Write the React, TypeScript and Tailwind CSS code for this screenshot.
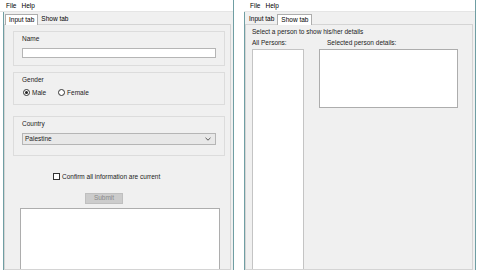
const font = { fontFamily: '"Liberation Sans", Arial, sans-serif' }

function MenuBar() {
  return (
    <div className="h-[12px] flex items-center gap-[5px] pl-[6px] text-[6.5px] text-black bg-white border-b border-[#e5e5e5]">
      <span>File</span>
      <span>Help</span>
    </div>
  )
}

function Tabs({ active }: { active: 0 | 1 }) {
  const tabs = ['Input tab', 'Show tab']
  return (
    <div className="h-[12px] flex items-end pl-[1px] text-[6.5px]">
      {tabs.map((t, i) => (
        <div
          key={t}
          className={
            i === active
              ? 'h-[11px] px-[3px] flex items-center bg-white border border-[#adadad] border-b-0 -mb-px relative z-10'
              : 'h-[10px] px-[3px] flex items-center bg-[#f0f0f0]'
          }
        >
          {t}
        </div>
      ))}
    </div>
  )
}

function Group({ title, children, className = '' }: { title: string; children: React.ReactNode; className?: string }) {
  return (
    <div className={`border border-[#dcdcdc] px-[8px] pt-[3px] ${className}`}>
      <div className="text-[6.5px] text-[#222] leading-[8px]">{title}</div>
      {children}
    </div>
  )
}

function Radio({ label, checked }: { label: string; checked?: boolean }) {
  return (
    <div className="flex items-center gap-[2px]">
      <div className="w-[7px] h-[7px] rounded-full border border-[#333] bg-white flex items-center justify-center">
        {checked && <div className="w-[3px] h-[3px] rounded-full bg-[#222]" />}
      </div>
      <span>{label}</span>
    </div>
  )
}

function InputWindow() {
  return (
    <div className="w-[234px] h-full flex flex-col bg-white border-r border-[#6f9ea3]">
      <MenuBar />
      <div className="flex-1 flex flex-col ml-[3px] bg-[#f0f0f0] border-l border-[#6f9ea3]">
        <Tabs active={0} />
        <div className="flex-1 flex flex-col border border-[#d4d4d4] mr-[2px] pl-[8px] pr-[5px] pt-[6px] text-[6.5px] text-[#222]">
          <Group title="Name" className="h-[35px]">
            <div className="mt-[5px] h-[10px] bg-white border border-[#b5b5b5]" />
          </Group>
          <Group title="Gender" className="mt-[6px] h-[33px]">
            <div className="flex gap-[12px] mt-[4px] ml-[1px]">
              <Radio label="Male" checked />
              <Radio label="Female" />
            </div>
          </Group>
          <Group title="Country" className="mt-[11px] h-[40px]">
            <div className="mt-[5px] h-[12px] bg-[#e8e8e8] border border-[#b5b5b5] flex items-center justify-between pl-[2px] pr-[4px]">
              <span>Palestine</span>
              <svg width="6" height="4" viewBox="0 0 6 4">
                <path d="M0.5 0.8 L3 3.2 L5.5 0.8" fill="none" stroke="#333" strokeWidth="0.8" />
              </svg>
            </div>
          </Group>
          <div className="mt-[16px] flex items-center gap-[2px] ml-[40px]">
            <div className="w-[7px] h-[7px] border border-[#333] bg-white" />
            <span>Confirm all information are current</span>
          </div>
          <div className="mt-[11px] ml-[72px] w-[38px] h-[11px] bg-[#cccccc] border border-[#bfbfbf] flex items-center justify-center text-[#8a8a8a]">
            Submit
          </div>
          <div className="mt-[4px] ml-[7px] w-[200px] flex-1 bg-white border border-[#adadad] border-b-0" />
        </div>
      </div>
    </div>
  )
}

function ShowWindow() {
  return (
    <div className="w-[232px] h-full flex flex-col bg-white border-r border-[#6f9ea3]">
      <MenuBar />
      <div className="flex-1 flex flex-col bg-[#f0f0f0] border-l border-[#6f9ea3]">
        <Tabs active={1} />
        <div className="flex-1 flex flex-col border border-[#d4d4d4] mr-[2px] pl-[6px] pt-[2px] text-[6.5px] text-[#222]">
          <div className="leading-[9px]">Select a person to show his/her details</div>
          <div className="flex mt-[3px] flex-1">
            <div className="flex flex-col w-[52px]">
              <div className="leading-[8px]">All Persons:</div>
              <div className="flex-1 mt-[2px] bg-white border border-[#c4c4c4] border-b-0" />
            </div>
            <div className="flex flex-col ml-[15px]">
              <div className="leading-[8px] pl-[8px]">Selected person details:</div>
              <div className="mt-[2px] w-[139px] h-[59px] bg-white border border-[#adadad]" />
            </div>
          </div>
        </div>
      </div>
    </div>
  )
}

export default function App() {
  return (
    <div className="w-[480px] h-[270px] flex bg-white overflow-hidden" style={font}>
      <InputWindow />
      <div className="w-[10px]" />
      <ShowWindow />
    </div>
  )
}
